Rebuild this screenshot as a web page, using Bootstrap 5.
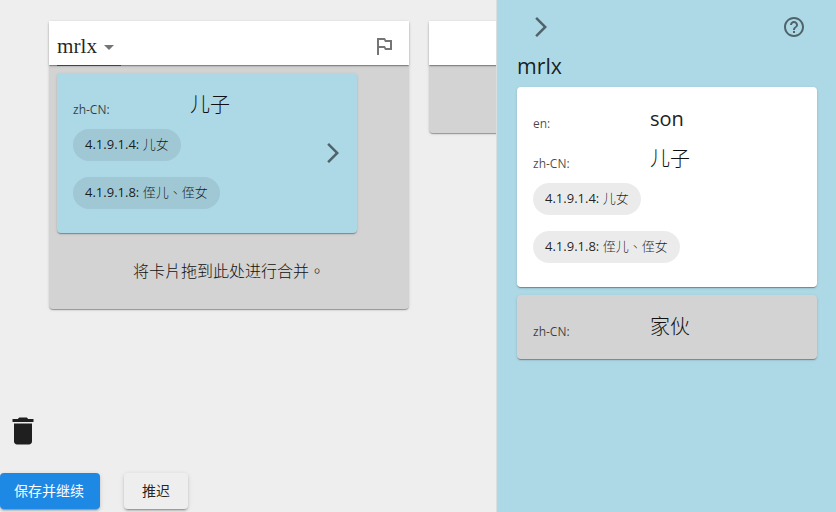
<!DOCTYPE html>
<html lang="zh-TW">
<head>
<meta charset="utf-8">
<meta name="viewport" content="width=device-width, initial-scale=1">
<title>mrlx</title>
<link href="https://cdn.jsdelivr.net/npm/bootstrap@5.3.0/dist/css/bootstrap.min.css" rel="stylesheet">
<style>
body{height:512px;background:#eee;color:rgba(0,0,0,.87);font-family:"Open Sans","Noto Sans CJK TC",sans-serif;font-size:16px;line-height:1.5}
svg{display:block;flex:none;width:24px;height:24px;fill:rgba(0,0,0,.54)}
.paper{border-radius:4px;box-shadow:0 2px 1px -1px rgba(0,0,0,.2),0 1px 1px rgba(0,0,0,.14),0 1px 3px rgba(0,0,0,.12)}
.board{width:496px;padding:21px 0 3px}
.lanes{padding-left:49px;gap:20px;height:288px}
.lane{width:360px;background:#d3d3d3}
.lane-short{height:112px}
.lane-head{height:44px;padding-right:13px;box-shadow:0 2px 1px -1px rgba(0,0,0,.2),0 1px 1px rgba(0,0,0,.14),0 1px 3px rgba(0,0,0,.12)}
.picker{width:64px;height:45px;margin-left:8px;padding-top:6px;border-bottom:1px solid #444;font:21.2px/38px "Liberation Serif",serif}
.picker svg{margin-top:8px}
.flag{margin-top:13px}
.sense{width:300px;margin:8px 0 0 8px;background:#add8e6;height:160px;padding:16px 12px 0 16px}
.sense-side{margin:0;padding:16px 16px 0}
.sense-son{height:200px}
.sense-guy{height:64px;background:#d3d3d3}
.gloss{height:40px}
.gloss-lang{width:117px;font-size:12px;line-height:18px;padding-top:12px;color:rgba(0,0,0,.72)}
.gloss-text{font-size:20px;line-height:30px;font-weight:300;padding-top:1px;color:#111}
.gloss-text.latin{font-weight:400;color:#222}
.chip{height:32px;border-radius:16px;background:rgba(0,0,0,.08);font-size:13px;padding:0 12px;line-height:31px;width:max-content;margin-bottom:16px}
.han{font-weight:300}
.drop-hint{height:76px;font-weight:300;color:#111}
.trash{width:36px;height:36px;margin-left:5px;fill:rgba(0,0,0,.87)}
.act{height:36px;border:0;border-radius:4px;font-size:14px;line-height:24px;box-shadow:0 3px 1px -2px rgba(0,0,0,.2),0 2px 2px rgba(0,0,0,.14),0 1px 5px rgba(0,0,0,.12)}
.act-save{width:100px;background:#1e88e5;color:#fff;padding:6px 2px 6px 0}
.act-later{width:64px;background:#eee;margin-left:24px;padding:6px 0;color:rgba(0,0,0,.87)}
.panel{width:340px;background:#add8e6;border-left:1px solid #d9dfe1;padding:15px 19px 0 20px}
.panel-title{font-size:21.3px;font-weight:400;line-height:32px;margin-top:11px;margin-bottom:5px}
.panel-bar{padding:0 11px 0 12px}
</style>
<script src="https://cdn.jsdelivr.net/npm/bootstrap@5.3.0/dist/js/bootstrap.bundle.min.js"></script>
</head>
<body class="d-flex overflow-hidden">
<main class="board d-flex flex-column flex-shrink-0 overflow-hidden">
  <div class="lanes d-flex align-items-start">
    <section class="lane paper flex-shrink-0 h-100">
      <header class="lane-head bg-white d-flex align-items-start justify-content-between">
        <div class="picker d-flex align-items-start"><span>mrlx</span><svg viewBox="0 0 24 24"><path d="M7 10l5 5 5-5z"/></svg></div>
        <svg class="flag" viewBox="0 0 24 24"><path d="M14 6l-1-2H5v17h2v-7h5l1 2h7V6h-6zm4 8h-4l-1-2H7V6h5l1 2h5v6z"/></svg>
      </header>
      <div class="sense paper d-flex justify-content-between">
        <div>
          <div class="gloss d-flex"><div class="gloss-lang">zh-CN:</div><div class="gloss-text">儿子</div></div>
          <div class="chip">4.1.9.1.4: <span class="han">儿女</span></div>
          <div class="chip">4.1.9.1.8: <span class="han">侄儿、侄女</span></div>
        </div>
        <svg class="align-self-center mb-3" viewBox="0 0 24 24"><path d="M6.23 20.23 8 22l10-10L8 2 6.23 3.77 14.46 12z"/></svg>
      </div>
      <div class="drop-hint d-flex align-items-center justify-content-center">将卡片拖到此处进行合并。</div>
    </section>
    <section class="lane lane-short paper flex-shrink-0"><div class="lane-head bg-white"></div></section>
  </div>
  <div class="mt-auto">
    <svg class="trash" viewBox="0 0 24 24"><path d="M6 19c0 1.1.9 2 2 2h8c1.1 0 2-.9 2-2V7H6v12zM19 4h-3.5l-1-1h-5l-1 1H5v2h14V4z"/></svg>
    <div class="d-flex pt-4"><button class="act act-save">保存并继续</button><button class="act act-later">推迟</button></div>
  </div>
</main>
<aside class="panel flex-shrink-0">
  <div class="panel-bar d-flex justify-content-between">
    <svg viewBox="0 0 24 24"><path d="M6.23 20.23 8 22l10-10L8 2 6.23 3.77 14.46 12z"/></svg>
    <svg viewBox="0 0 24 24"><path d="M11 18h2v-2h-2v2zm1-16C6.48 2 2 6.48 2 12s4.48 10 10 10 10-4.48 10-10S17.52 2 12 2zm0 18c-4.41 0-8-3.59-8-8s3.59-8 8-8 8 3.59 8 8-3.59 8-8 8zm0-14c-2.21 0-4 1.79-4 4h2c0-1.1.9-2 2-2s2 .9 2 2c0 2-3 1.75-3 5h2c0-2.25 3-2.5 3-5 0-2.21-1.79-4-4-4z"/></svg>
  </div>
  <h1 class="panel-title">mrlx</h1>
  <div class="sense sense-side sense-son paper bg-white">
    <div class="gloss d-flex"><div class="gloss-lang">en:</div><div class="gloss-text latin">son</div></div>
    <div class="gloss d-flex"><div class="gloss-lang">zh-CN:</div><div class="gloss-text">儿子</div></div>
    <div class="chip">4.1.9.1.4: <span class="han">儿女</span></div>
    <div class="chip">4.1.9.1.8: <span class="han">侄儿、侄女</span></div>
  </div>
  <div class="sense sense-side sense-guy paper mt-2">
    <div class="gloss d-flex"><div class="gloss-lang">zh-CN:</div><div class="gloss-text">家伙</div></div>
  </div>
</aside>
</body>
</html>
